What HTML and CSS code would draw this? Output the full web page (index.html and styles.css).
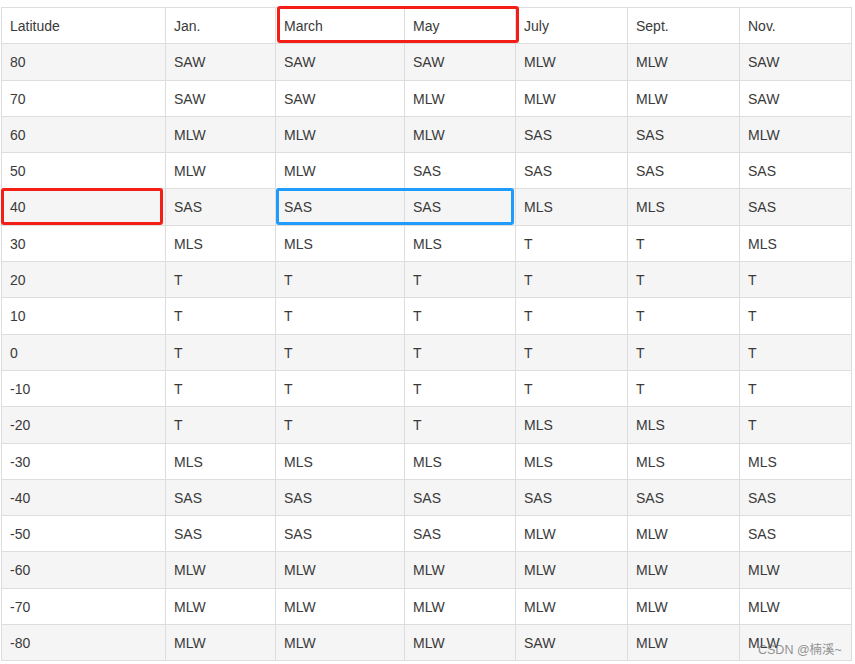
FILE: index.html
```html
<!DOCTYPE html>
<html>
<head>
<meta charset="utf-8">
<link rel="stylesheet" href="styles.css">
</head>
<body>
<div class="wrap">
<table class="grid">
<colgroup>
<col class="c0"><col class="c1"><col class="c2"><col class="c3"><col class="c4"><col class="c5"><col class="c6">
</colgroup>
<thead>
<tr><td>Latitude</td><td>Jan.</td><td>March</td><td>May</td><td>July</td><td>Sept.</td><td>Nov.</td></tr>
</thead>
<tbody>
<tr><td>80</td><td>SAW</td><td>SAW</td><td>SAW</td><td>MLW</td><td>MLW</td><td>SAW</td></tr>
<tr><td>70</td><td>SAW</td><td>SAW</td><td>MLW</td><td>MLW</td><td>MLW</td><td>SAW</td></tr>
<tr><td>60</td><td>MLW</td><td>MLW</td><td>MLW</td><td>SAS</td><td>SAS</td><td>MLW</td></tr>
<tr><td>50</td><td>MLW</td><td>MLW</td><td>SAS</td><td>SAS</td><td>SAS</td><td>SAS</td></tr>
<tr><td>40</td><td>SAS</td><td>SAS</td><td>SAS</td><td>MLS</td><td>MLS</td><td>SAS</td></tr>
<tr><td>30</td><td>MLS</td><td>MLS</td><td>MLS</td><td>T</td><td>T</td><td>MLS</td></tr>
<tr><td>20</td><td>T</td><td>T</td><td>T</td><td>T</td><td>T</td><td>T</td></tr>
<tr><td>10</td><td>T</td><td>T</td><td>T</td><td>T</td><td>T</td><td>T</td></tr>
<tr><td>0</td><td>T</td><td>T</td><td>T</td><td>T</td><td>T</td><td>T</td></tr>
<tr><td>-10</td><td>T</td><td>T</td><td>T</td><td>T</td><td>T</td><td>T</td></tr>
<tr><td>-20</td><td>T</td><td>T</td><td>T</td><td>MLS</td><td>MLS</td><td>T</td></tr>
<tr><td>-30</td><td>MLS</td><td>MLS</td><td>MLS</td><td>MLS</td><td>MLS</td><td>MLS</td></tr>
<tr><td>-40</td><td>SAS</td><td>SAS</td><td>SAS</td><td>SAS</td><td>SAS</td><td>SAS</td></tr>
<tr><td>-50</td><td>SAS</td><td>SAS</td><td>SAS</td><td>MLW</td><td>MLW</td><td>SAS</td></tr>
<tr><td>-60</td><td>MLW</td><td>MLW</td><td>MLW</td><td>MLW</td><td>MLW</td><td>MLW</td></tr>
<tr><td>-70</td><td>MLW</td><td>MLW</td><td>MLW</td><td>MLW</td><td>MLW</td><td>MLW</td></tr>
<tr><td>-80</td><td>MLW</td><td>MLW</td><td>MLW</td><td>SAW</td><td>MLW</td><td>MLW</td></tr>
</tbody>
</table>
<div class="mark mark-head"></div>
<div class="mark mark-lat"></div>
<div class="mark mark-blue"></div>
<div class="watermark">CSDN @楠溪~</div>
</div>
</body>
</html>
```

FILE: styles.css
```css
html, body {
  margin: 0;
  padding: 0;
  background: #ffffff;
}
body {
  padding: 7px 0 0 1px;
  font-family: "Liberation Sans", Arial, sans-serif;
  font-size: 14px;
  color: #3a3a3a;
}
.wrap {
  position: relative;
  width: 850px;
}
.grid {
  border-collapse: collapse;
  table-layout: fixed;
  width: 850px;
}
.c0 { width: 164px; }
.c1 { width: 110px; }
.c2 { width: 129px; }
.c3 { width: 111px; }
.c4 { width: 112px; }
.c5 { width: 112px; }
.c6 { width: 112px; }
.grid td {
  border: 1px solid #dddddd;
  padding: 9px 7px 7px 8px;
  line-height: 19.3px;
  vertical-align: top;
  text-align: left;
  white-space: nowrap;
}
.grid tbody tr:nth-child(odd) td {
  background: #f5f5f5;
}
.mark {
  position: absolute;
  box-sizing: border-box;
  border: 3px solid #f41e16;
  border-radius: 3px;
}
.mark-head {
  left: 276px;
  top: -1px;
  width: 242px;
  height: 37px;
}
.mark-lat {
  left: 0;
  top: 181px;
  width: 162px;
  height: 37px;
}
.mark-blue {
  left: 275px;
  top: 181px;
  width: 238px;
  height: 37px;
  border-color: #1e9bfb;
}
.watermark {
  position: absolute;
  left: 757px;
  top: 632px;
  font-size: 12.5px;
  color: rgba(110, 110, 110, 0.75);
  font-family: "Liberation Sans", "Noto Sans CJK SC", sans-serif;
}
```
